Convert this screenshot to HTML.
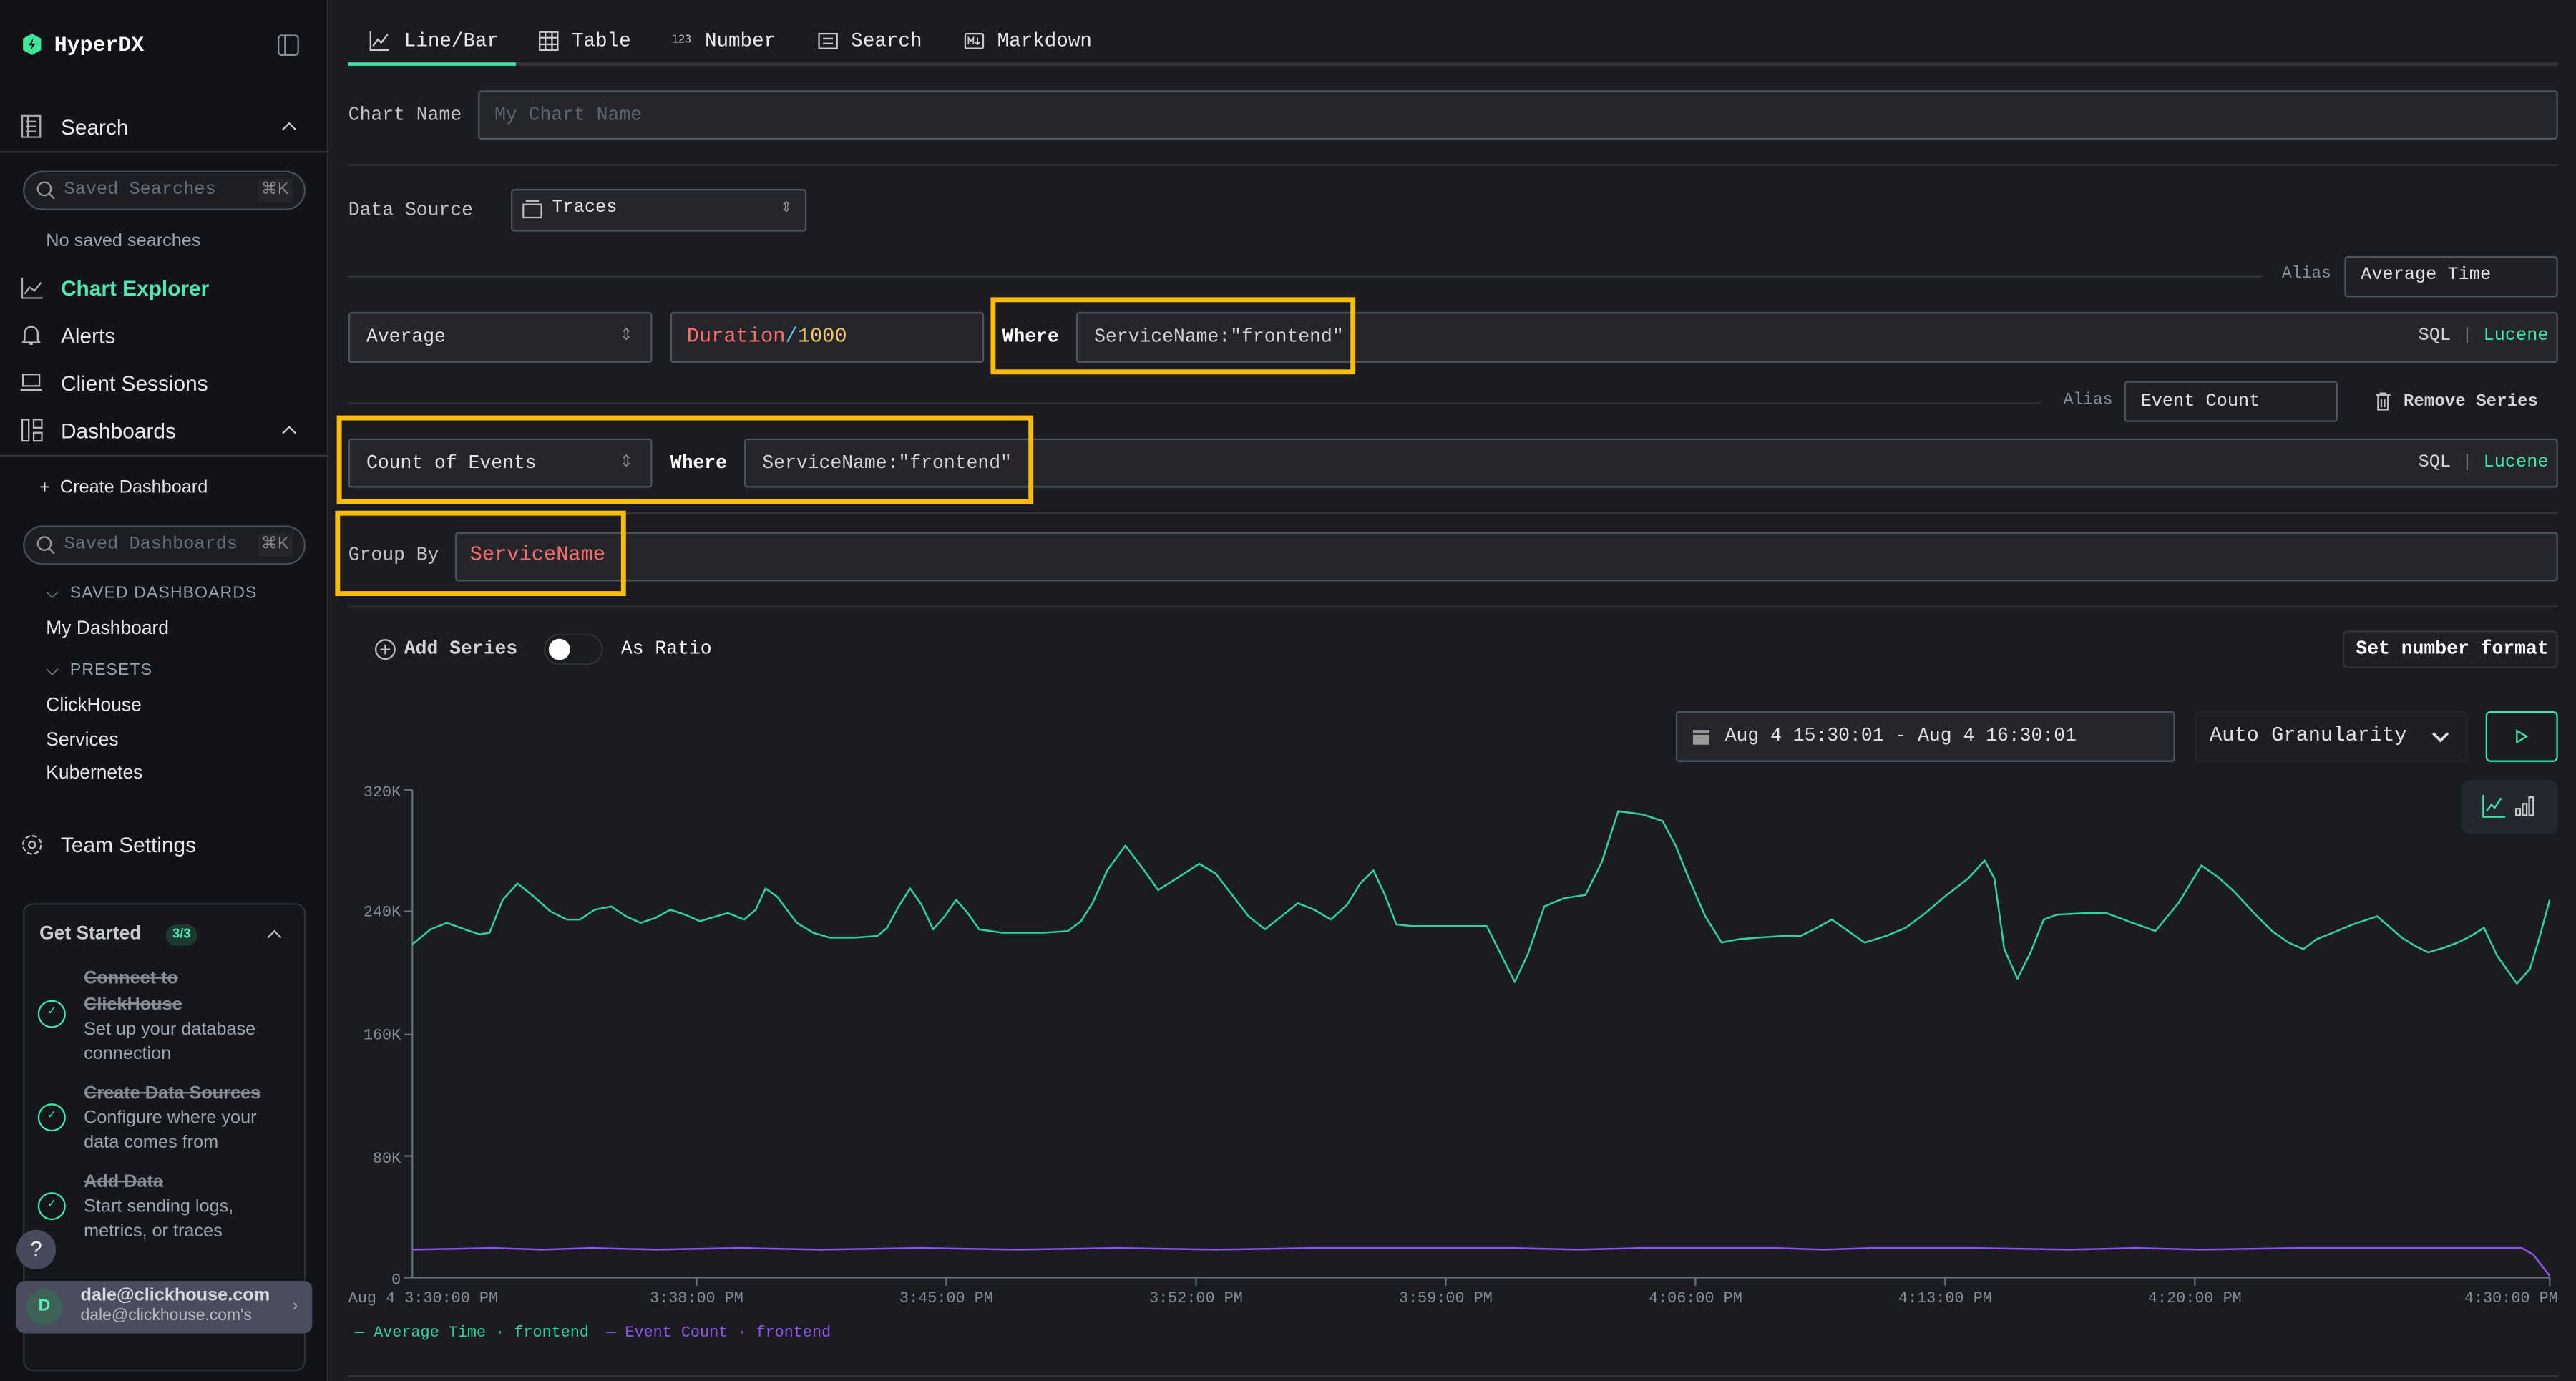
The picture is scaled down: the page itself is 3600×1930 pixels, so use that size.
<!DOCTYPE html>
<html><head><meta charset="utf-8"><style>
*{box-sizing:border-box;margin:0;padding:0}
html,body{width:3600px;height:1930px;overflow:hidden;background:#1b1c21}
#root{position:absolute;left:0;top:0;width:1568px;height:841px;transform:scale(2.29592,2.2949);transform-origin:0 0;background:#1b1c21;font-family:"Liberation Mono",monospace;color:#d9dadd;line-height:1.35}
.a{position:absolute;white-space:nowrap}
.sans{font-family:"Liberation Sans",sans-serif}
.box{position:absolute;border:1px solid #50535b;background:#25262b;border-radius:2px}
.hl{position:absolute;height:1px;background:#33353b}
.yb{position:absolute;border:3px solid #fbbc05}
.mono{font-family:"Liberation Mono",monospace}
</style></head><body><div id="root">
<!-- sidebar -->
<div class="a" style="left:0;top:0;width:200px;height:841px;background:#111318;border-right:1px solid #2a2c32"></div>
<svg class="a" style="left:13px;top:20px" width="13" height="14" viewBox="0 0 13 14"><path d="M6.5 0.5L12 3.5V10.5L6.5 13.5L1 10.5V3.5Z" fill="#3ee89a"/><path d="M7.5 3L4.5 7.5H6.5L5.5 11L8.5 6.5H6.5Z" fill="#111318"/></svg>
<div class="a" style="left:33px;top:19px;font-size:13px;font-weight:bold;color:#fff">HyperDX</div>
<svg class="a" style="left:169px;top:21px" width="13" height="13"><rect x="0.5" y="0.5" width="12" height="12" rx="2" fill="none" stroke="#8a8d95"/><line x1="4.5" y1="1" x2="4.5" y2="12" stroke="#8a8d95"/></svg>
<svg class="a" style="left:13px;top:70px" width="13" height="14"><rect x="0.5" y="0.5" width="11" height="13" fill="none" stroke="#aaa"/><path d="M3 4h6M3 7h6M3 10h6M4 1v12" stroke="#aaa" fill="none"/></svg>
<div class="a sans" style="left:37px;top:69px;font-size:13px;color:#e6e7ea">Search</div>
<svg class="a" style="left:171px;top:73px" width="10" height="7"><path d="M1 6L5 2L9 6" stroke="#ccc" fill="none"/></svg>
<div class="hl" style="left:0;top:92px;width:200px"></div>
<div class="a" style="left:14px;top:104px;width:172px;height:24px;border:1px solid #4a4d55;border-radius:12px;background:#1c1e24"></div>
<svg class="a" style="left:22px;top:110px" width="12" height="12"><circle cx="5" cy="5" r="4" stroke="#999" fill="none"/><path d="M8 8l3 3" stroke="#999"/></svg>
<div class="a" style="left:39px;top:109px;font-size:11px;color:#6b6e76">Saved Searches</div>
<div class="a sans" style="left:157px;top:109px;font-size:10px;color:#888;background:#25272d;padding:0 2px">⌘K</div>
<div class="a sans" style="left:28px;top:140px;font-size:11px;color:#9ea2aa">No saved searches</div>
<svg class="a" style="left:13px;top:169px" width="13" height="13"><path d="M0.5 0v12.5H13" stroke="#aaa" fill="none"/><path d="M2 10l3-4 3 2 4-5" stroke="#aaa" fill="none"/></svg>
<div class="a sans" style="left:37px;top:167px;font-size:13px;font-weight:bold;color:#4fe8b0">Chart Explorer</div>
<svg class="a" style="left:13px;top:197px" width="12" height="14"><path d="M2 10V6a4 4 0 0 1 8 0v4l1 1.5H1Z M5 12.5h2" stroke="#bbb" fill="none"/></svg>
<div class="a sans" style="left:37px;top:196px;font-size:13px;color:#e6e7ea">Alerts</div>
<svg class="a" style="left:12px;top:227px" width="14" height="12"><rect x="2" y="1" width="10" height="7" fill="none" stroke="#bbb"/><path d="M0.5 10.5h13" stroke="#bbb"/></svg>
<div class="a sans" style="left:37px;top:225px;font-size:13px;color:#e6e7ea">Client Sessions</div>
<svg class="a" style="left:13px;top:255px" width="13" height="14"><rect x="0.5" y="0.5" width="4" height="13" fill="none" stroke="#bbb"/><rect x="7.5" y="0.5" width="5" height="5" fill="none" stroke="#bbb"/><rect x="7.5" y="8.5" width="5" height="5" fill="none" stroke="#bbb"/></svg>
<div class="a sans" style="left:37px;top:254px;font-size:13px;color:#e6e7ea">Dashboards</div>
<svg class="a" style="left:171px;top:258px" width="10" height="7"><path d="M1 6L5 2L9 6" stroke="#ccc" fill="none"/></svg>
<div class="hl" style="left:0;top:277px;width:200px"></div>
<div class="a sans" style="left:24px;top:290px;font-size:11px;color:#e6e7ea">+&nbsp; Create Dashboard</div>
<div class="a" style="left:14px;top:320px;width:172px;height:24px;border:1px solid #4a4d55;border-radius:12px;background:#1c1e24"></div>
<svg class="a" style="left:22px;top:326px" width="12" height="12"><circle cx="5" cy="5" r="4" stroke="#999" fill="none"/><path d="M8 8l3 3" stroke="#999"/></svg>
<div class="a" style="left:39px;top:325px;font-size:11px;color:#6b6e76">Saved Dashboards</div>
<div class="a sans" style="left:157px;top:325px;font-size:10px;color:#888;background:#25272d;padding:0 2px">⌘K</div>
<div class="a sans" style="left:28px;top:355px;font-size:10px;color:#9ea2aa;letter-spacing:.5px">⌵&nbsp; SAVED DASHBOARDS</div>
<div class="a sans" style="left:28px;top:376px;font-size:11.5px;color:#e6e7ea">My Dashboard</div>
<div class="a sans" style="left:28px;top:402px;font-size:10px;color:#9ea2aa;letter-spacing:.5px">⌵&nbsp; PRESETS</div>
<div class="a sans" style="left:28px;top:423px;font-size:11.5px;color:#e6e7ea">ClickHouse</div>
<div class="a sans" style="left:28px;top:444px;font-size:11.5px;color:#e6e7ea">Services</div>
<div class="a sans" style="left:28px;top:464px;font-size:11.5px;color:#e6e7ea">Kubernetes</div>
<svg class="a" style="left:13px;top:508px" width="13" height="13"><circle cx="6.5" cy="6.5" r="2" stroke="#bbb" fill="none"/><circle cx="6.5" cy="6.5" r="5.5" stroke="#bbb" fill="none" stroke-dasharray="3 1.3"/></svg>
<div class="a sans" style="left:37px;top:506px;font-size:13px;color:#e6e7ea">Team Settings</div>
<div class="a" style="left:14px;top:550px;width:172px;height:285px;border:1px solid #2e3037;border-radius:6px;background:#15171c"></div>
<div class="a sans" style="left:24px;top:562px;font-size:11.5px;font-weight:bold;color:#c8cad0">Get Started</div>
<div class="a sans" style="left:101px;top:563px;font-size:8px;font-weight:bold;color:#4fe8b0;background:#1d3a30;border-radius:7px;padding:1px 4px">3/3</div>
<svg class="a" style="left:162px;top:566px" width="10" height="6"><path d="M1 5L5 1L9 5" stroke="#bbb" fill="none"/></svg>
<div class="a sans" style="left:51px;top:588px;font-size:11px;line-height:16px;color:#8a8d95;text-decoration:line-through;font-weight:bold">Connect to<br>ClickHouse</div>
<div class="a sans" style="left:51px;top:620px;font-size:11px;line-height:15px;color:#a0a3aa">Set up your database<br>connection</div>
<div class="a" style="left:23px;top:609px;width:17px;height:17px;border:1.5px solid #3ee8a8;border-radius:50%;color:#3ee8a8;font-size:8px;text-align:center;line-height:14px">✓</div>
<div class="a sans" style="left:51px;top:659px;font-size:11px;color:#8a8d95;text-decoration:line-through;font-weight:bold">Create Data Sources</div>
<div class="a sans" style="left:51px;top:674px;font-size:11px;line-height:15px;color:#a0a3aa">Configure where your<br>data comes from</div>
<div class="a" style="left:23px;top:672px;width:17px;height:17px;border:1.5px solid #3ee8a8;border-radius:50%;color:#3ee8a8;font-size:8px;text-align:center;line-height:14px">✓</div>
<div class="a sans" style="left:51px;top:713px;font-size:11px;color:#8a8d95;text-decoration:line-through;font-weight:bold">Add Data</div>
<div class="a sans" style="left:51px;top:728px;font-size:11px;line-height:15px;color:#a0a3aa">Start sending logs,<br>metrics, or traces</div>
<div class="a" style="left:23px;top:726px;width:17px;height:17px;border:1.5px solid #3ee8a8;border-radius:50%;color:#3ee8a8;font-size:8px;text-align:center;line-height:14px">✓</div>
<div class="a sans" style="left:10px;top:749px;width:24px;height:24px;border-radius:50%;background:#474a5a;color:#eee;font-size:13px;text-align:center;line-height:24px">?</div>
<div class="a" style="left:10px;top:780px;width:180px;height:32px;border-radius:5px;background:#4b4d5e"></div>
<div class="a sans" style="left:16px;top:785px;width:22px;height:22px;border-radius:50%;background:#3d6258;color:#5ef0b8;font-size:10px;font-weight:bold;text-align:center;line-height:22px">D</div>
<div class="a sans" style="left:49px;top:782px;font-size:11px;font-weight:bold;color:#d8d9de">dale@clickhouse.com</div>
<div class="a sans" style="left:49px;top:795px;font-size:10px;color:#b8bac2">dale@clickhouse.com's</div>
<div class="a sans" style="left:178px;top:789px;font-size:10px;color:#aaa">›</div>

<!-- tabs -->
<svg class="a" style="left:225px;top:19px" width="12" height="12"><path d="M0.5 0v11.5H12" stroke="#ccc" fill="none"/><path d="M2 9l3-4 2 2 4-5" stroke="#ccc" fill="none"/></svg>
<div class="a" style="left:246px;top:17px;font-size:12px;color:#e6e7ea">Line/Bar</div>
<svg class="a" style="left:328px;top:19px" width="12" height="12"><rect x="0.5" y="0.5" width="11" height="11" fill="none" stroke="#ccc"/><path d="M0 4h12M0 8h12M4 0v12M8 0v12" stroke="#ccc"/></svg>
<div class="a" style="left:348px;top:17px;font-size:12px;color:#e6e7ea">Table</div>
<div class="a sans" style="left:409px;top:20px;font-size:7px;color:#ccc">123</div>
<div class="a" style="left:429px;top:17px;font-size:12px;color:#e6e7ea">Number</div>
<svg class="a" style="left:498px;top:20px" width="12" height="10"><rect x="0.5" y="0.5" width="11" height="9" fill="none" stroke="#ccc"/><path d="M3 3.5h6M3 6.5h6" stroke="#ccc"/></svg>
<div class="a" style="left:518px;top:17px;font-size:12px;color:#e6e7ea">Search</div>
<svg class="a" style="left:587px;top:20px" width="12" height="10"><rect x="0.5" y="0.5" width="11" height="9" rx="1" fill="none" stroke="#ccc"/><path d="M2.5 7V3l1.5 2 1.5-2v4M8 3v4M6.5 5.5l1.5 1.5 1.5-1.5" stroke="#ccc" fill="none" stroke-width=".8"/></svg>
<div class="a" style="left:607px;top:17px;font-size:12px;color:#e6e7ea">Markdown</div>
<div class="a" style="left:212px;top:38px;width:1345px;height:2px;background:#33353b"></div>
<div class="a" style="left:212px;top:38px;width:102px;height:2px;background:#3ee8a8"></div>

<div class="a" style="left:212px;top:63px;font-size:11.5px;color:#c0c2c8">Chart Name</div>
<div class="box" style="left:291px;top:55px;width:1266px;height:30px"></div>
<div class="a" style="left:301px;top:63px;font-size:11.5px;color:#60636b">My Chart Name</div>
<div class="hl" style="left:212px;top:100px;width:1345px"></div>
<div class="a" style="left:212px;top:121px;font-size:11.5px;color:#c0c2c8">Data Source</div>
<div class="box" style="left:311px;top:115px;width:180px;height:26px"></div>
<svg class="a" style="left:318px;top:122px" width="12" height="11"><rect x="0.5" y="2.5" width="11" height="8" fill="none" stroke="#bbb"/><path d="M2 0.5h8" stroke="#bbb"/></svg>
<div class="a" style="left:336px;top:120px;font-size:11px;color:#e0e1e4">Traces</div>
<div class="a sans" style="left:475px;top:120px;font-size:9px;color:#888">⇕</div>
<div class="hl" style="left:212px;top:168px;width:1165px"></div>
<div class="a" style="left:1389px;top:161px;font-size:10px;color:#8a8d95">Alias</div>
<div class="box" style="left:1427px;top:156px;width:130px;height:25px;background:#1f2025"></div>
<div class="a" style="left:1437px;top:161px;font-size:11px;color:#e0e1e4">Average Time</div>

<div class="box" style="left:212px;top:190px;width:185px;height:31px"></div>
<div class="a" style="left:223px;top:198px;font-size:11.5px;color:#e0e1e4">Average</div>
<div class="a sans" style="left:377px;top:198px;font-size:10px;color:#888">⇕</div>
<div class="box" style="left:408px;top:190px;width:191px;height:31px"></div>
<div class="a" style="left:418px;top:197px;font-size:12.5px;color:#ff6b6b">Duration<span style="color:#5fc6e8">/</span><span style="color:#f2c46b">1000</span></div>
<div class="box" style="left:655px;top:190px;width:902px;height:31px"></div>
<div class="a" style="left:610px;top:198px;font-size:11.5px;color:#fff;font-weight:bold">Where</div>
<div class="a" style="left:666px;top:198px;font-size:11.5px;color:#d0d2d6">ServiceName:"frontend"</div>
<div class="a" style="left:1472px;top:198px;font-size:11px;color:#d0d2d6">SQL <span style="color:#777">|</span> <span style="color:#3ee8a8">Lucene</span></div>
<div class="yb" style="left:603px;top:181px;width:222px;height:47px"></div>

<div class="hl" style="left:212px;top:245px;width:1030px"></div>
<div class="a" style="left:1256px;top:238px;font-size:10px;color:#8a8d95">Alias</div>
<div class="box" style="left:1293px;top:232px;width:130px;height:25px;background:#1f2025"></div>
<div class="a" style="left:1303px;top:238px;font-size:11px;color:#e0e1e4">Event Count</div>
<svg class="a" style="left:1446px;top:239px" width="9" height="11"><path d="M0 1.5h9M3 1.5V0.5h3v1M1.5 2v8.5h6V2M3.5 4v5M5.5 4v5" stroke="#bbb" fill="none"/></svg>
<div class="a" style="left:1463px;top:238px;font-size:10.5px;color:#d0d2d6;font-weight:bold">Remove Series</div>

<div class="box" style="left:212px;top:267px;width:185px;height:30px"></div>
<div class="a" style="left:223px;top:275px;font-size:11.5px;color:#e0e1e4">Count of Events</div>
<div class="a sans" style="left:377px;top:275px;font-size:10px;color:#888">⇕</div>
<div class="a" style="left:408px;top:275px;font-size:11.5px;color:#fff;font-weight:bold">Where</div>
<div class="box" style="left:453px;top:267px;width:1104px;height:30px"></div>
<div class="a" style="left:464px;top:275px;font-size:11.5px;color:#d0d2d6">ServiceName:"frontend"</div>
<div class="a" style="left:1472px;top:275px;font-size:11px;color:#d0d2d6">SQL <span style="color:#777">|</span> <span style="color:#3ee8a8">Lucene</span></div>
<div class="yb" style="left:205px;top:253px;width:424px;height:54px"></div>

<div class="hl" style="left:212px;top:312px;width:1345px"></div>
<div class="a" style="left:212px;top:331px;font-size:11.5px;color:#c0c2c8">Group By</div>
<div class="box" style="left:277px;top:324px;width:1280px;height:30px"></div>
<div class="a" style="left:286px;top:330px;font-size:12.5px;color:#ff6b6b">ServiceName</div>
<div class="yb" style="left:204px;top:311px;width:177px;height:52px"></div>
<div class="hl" style="left:212px;top:369px;width:1345px"></div>

<svg class="a" style="left:228px;top:389px" width="13" height="13"><circle cx="6.5" cy="6.5" r="5.8" stroke="#bbb" fill="none"/><path d="M6.5 3.5v6M3.5 6.5h6" stroke="#bbb"/></svg>
<div class="a" style="left:246px;top:388px;font-size:11.5px;color:#d0d2d6;font-weight:bold">Add Series</div>
<div class="a" style="left:331px;top:386px;width:36px;height:19px;border-radius:10px;background:#1b1c21;border:1px solid #2e3036"></div>
<div class="a" style="left:334px;top:389px;width:13px;height:13px;border-radius:50%;background:#fff"></div>
<div class="a" style="left:378px;top:388px;font-size:11.5px;color:#fff">As Ratio</div>
<div class="a" style="left:1426px;top:384px;width:131px;height:23px;border:1px solid #33353b;border-radius:3px;background:#1f2025"></div>
<div class="a" style="left:1434px;top:388px;font-size:11.5px;color:#fff;font-weight:bold">Set number format</div>

<div class="box" style="left:1020px;top:433px;width:304px;height:31px"></div>
<svg class="a" style="left:1030px;top:443px" width="11" height="11"><rect x="0.5" y="1.5" width="10" height="9" fill="#999"/><path d="M0 4h11" stroke="#333"/></svg>
<div class="a" style="left:1050px;top:441px;font-size:11.5px;color:#e0e1e4">Aug 4 15:30:01 - Aug 4 16:30:01</div>
<div class="a" style="left:1336px;top:433px;width:166px;height:31px;border:1px solid #24262b;border-radius:3px;background:#1d1e23"></div>
<div class="a" style="left:1345px;top:440px;font-size:12.5px;color:#e0e1e4">Auto Granularity</div>
<svg class="a" style="left:1480px;top:445px" width="11" height="8"><path d="M1 1.5l4.5 4.5 4.5-4.5" stroke="#ddd" stroke-width="1.6" fill="none"/></svg>
<div class="a" style="left:1513px;top:433px;width:44px;height:31px;border:1.3px solid #3ee8a8;border-radius:3px"></div>
<svg class="a" style="left:1531px;top:444px" width="8" height="9"><path d="M1 1l6 3.5L1 8Z" stroke="#3ee8a8" fill="none"/></svg>
<div class="a" style="left:1498px;top:475px;width:59px;height:33px;border-radius:5px;background:#23272e"></div>
<svg class="a" style="left:1511px;top:484px" width="14" height="14"><path d="M0.5 0v13.5H14" stroke="#3ee8a8" fill="none"/><path d="M2.5 10l3-4 2 2 4-6" stroke="#3ee8a8" fill="none"/></svg>
<svg class="a" style="left:1531px;top:485px" width="12" height="12"><rect x="0.5" y="7.5" width="2.5" height="4" fill="none" stroke="#ccc"/><rect x="4.5" y="4.5" width="2.5" height="7" fill="none" stroke="#ccc"/><rect x="8.5" y="0.5" width="2.5" height="11" fill="none" stroke="#ccc"/></svg>

<!-- chart -->
<svg class="a" style="left:0;top:0" width="1568" height="841">
<g font-family="Liberation Mono, monospace" font-size="9.5" fill="#8a8d95">
<text x="244" y="485" text-anchor="end">320K</text>
<text x="244" y="558" text-anchor="end">240K</text>
<text x="244" y="633" text-anchor="end">160K</text>
<text x="244" y="708" text-anchor="end">80K</text>
<text x="244" y="782" text-anchor="end">0</text>
<text x="212" y="793">Aug 4 3:30:00 PM</text>
<text x="424" y="793" text-anchor="middle">3:38:00 PM</text>
<text x="576" y="793" text-anchor="middle">3:45:00 PM</text>
<text x="728" y="793" text-anchor="middle">3:52:00 PM</text>
<text x="880" y="793" text-anchor="middle">3:59:00 PM</text>
<text x="1032" y="793" text-anchor="middle">4:06:00 PM</text>
<text x="1184" y="793" text-anchor="middle">4:13:00 PM</text>
<text x="1336" y="793" text-anchor="middle">4:20:00 PM</text>
<text x="1557" y="793" text-anchor="end">4:30:00 PM</text>
</g>
<g stroke="#6b6e76" fill="none">
<path d="M251 481V778H1552"/>
<path d="M246 481h5M246 555h5M246 630h5M246 704h5M246 778h5"/>
<path d="M424 778v5M576 778v5M728 778v5M880 778v5M1032 778v5M1184 778v5M1336 778v5M1552 778v5"/>
</g>
<polyline fill="none" stroke="#2fd39a" stroke-width="1.1" stroke-linejoin="round" points="251,575 262,566 272,562 283,566 292,569 298,568 306,548 315,538 325,546 335,555 345,560 353,560 362,554 372,552 381,558 390,562 399,559 408,554 417,557 426,561 436,558 443,556 453,560 460,554 466,541 473,546 485,562 495,568 505,571 520,571 534,570 540,565 547,552 554,541 561,551 568,566 575,558 582,548 589,556 596,566 610,568 635,568 650,567 658,561 665,550 674,530 685,515 695,528 705,542 716,535 730,526 740,532 750,545 760,558 770,566 780,558 790,550 800,554 810,560 820,551 828,538 836,530 843,545 850,563 860,564 880,564 905,564 914,582 922,598 930,581 940,552 952,547 965,545 975,525 985,494 1000,496 1012,500 1020,515 1028,535 1038,558 1048,574 1058,572 1070,571 1085,570 1096,570 1106,565 1115,560 1125,567 1135,574 1148,570 1160,565 1172,556 1185,545 1198,535 1208,524 1214,535 1220,578 1228,596 1236,580 1244,560 1252,557 1270,556 1282,556 1298,562 1312,567 1326,550 1340,527 1350,534 1360,543 1372,556 1383,567 1393,574 1402,578 1410,572 1420,568 1432,563 1447,558 1455,565 1462,571 1470,576 1478,580 1488,577 1496,574 1504,570 1512,565 1520,582 1532,599 1540,590 1546,570 1552,548"/>
<polyline fill="none" stroke="#8f56e6" stroke-width="1.1" points="251,761 300,760 330,761 360,760 400,761 450,760 500,761 560,760 620,761 680,760 740,761 800,760 860,760 920,760 960,761 1000,760 1040,760 1080,760 1110,761 1140,760 1200,760 1260,761 1300,760 1340,761 1400,760 1460,760 1535,760 1542,764 1552,777"/>
<g font-family="Liberation Mono, monospace" font-size="9.5">
<text x="216" y="814" fill="#2fd39a">— Average Time · frontend</text>
<text x="369" y="814" fill="#8f56e6">— Event Count · frontend</text>
</g>
<line x1="212" y1="838" x2="1557" y2="838" stroke="#33353b"/>
</svg>
</div></body></html>
